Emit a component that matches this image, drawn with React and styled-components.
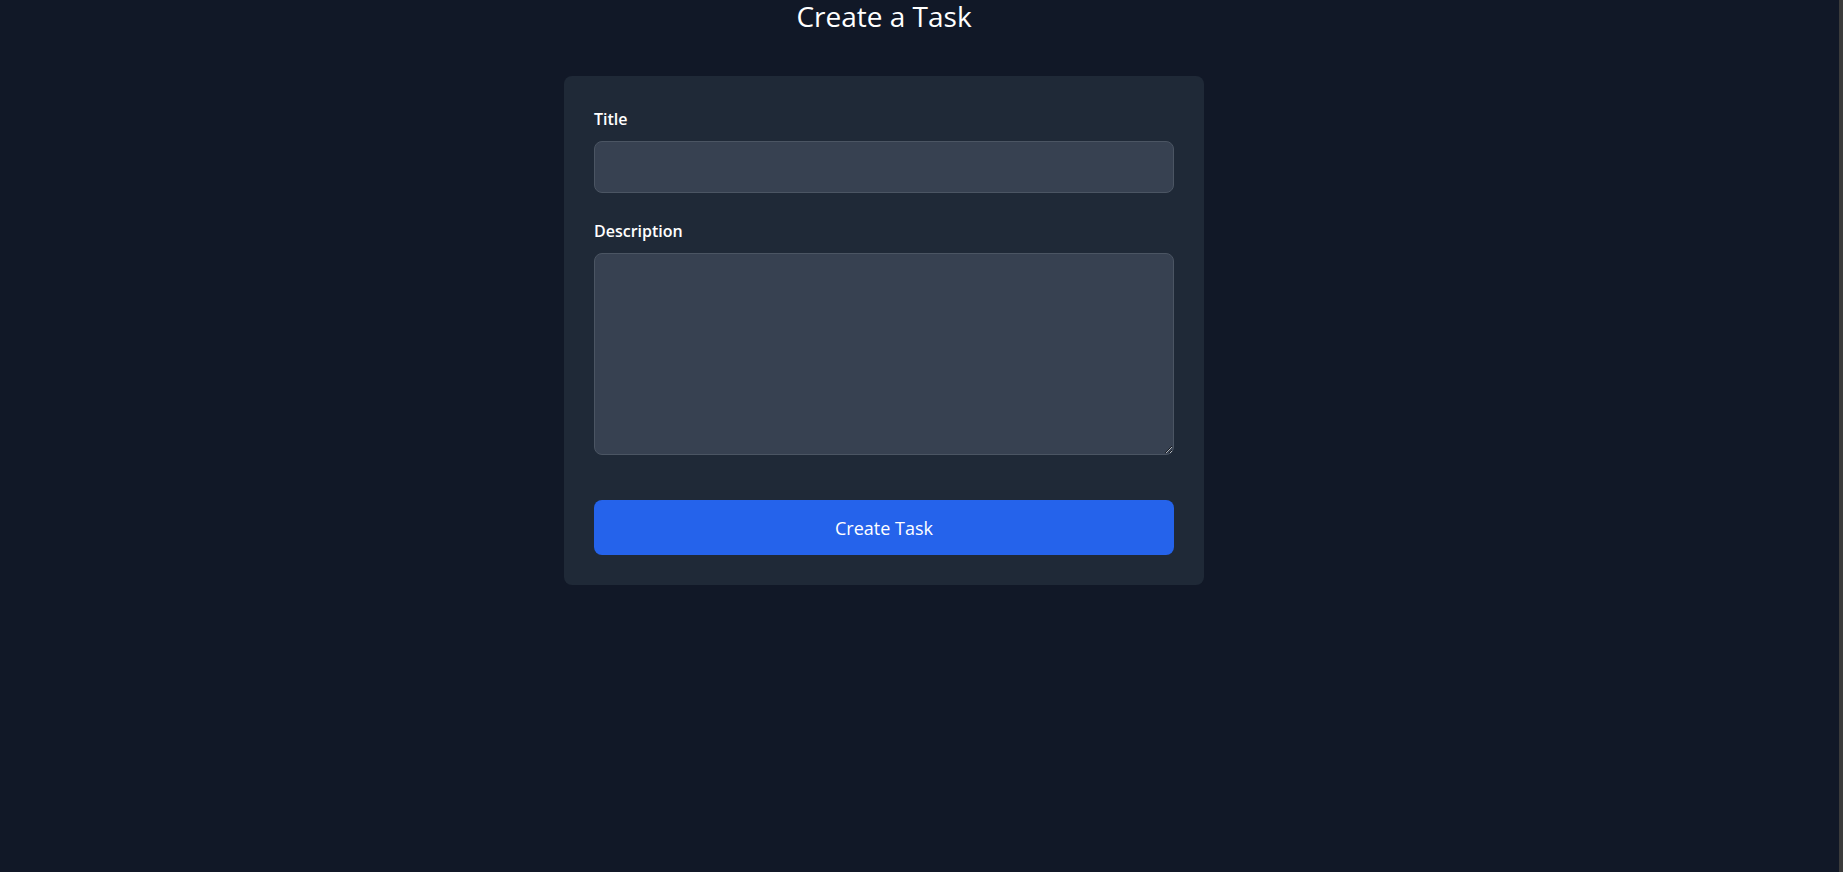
import React from 'react';
import styled, { createGlobalStyle } from 'styled-components';

const GlobalStyle = createGlobalStyle`
	html, body {
		margin: 0;
		padding: 0;
		background-color: #111827;
	}
	body {
		font-family: 'Open Sans', 'Noto Sans', sans-serif;
		color: #ffffff;
	}
	* {
		box-sizing: border-box;
	}
`;

const Page = styled.div`
	display: flex;
	min-height: 872px;
	background-color: #111827;
`;

const Main = styled.main`
	flex: 1;
	display: flex;
	flex-direction: column;
	align-items: center;
	padding-right: 71px;
`;

const ScrollStrip = styled.div`
	width: 4px;
	background-color: #3b3b3b;
`;

const Heading = styled.h1`
	margin: 0;
	font-size: 28px;
	font-weight: 400;
	line-height: 32px;
	color: #ffffff;
`;

const Card = styled.form`
	margin-top: 44px;
	width: 640px;
	padding: 30px;
	background-color: #1f2937;
	border-radius: 8px;
	display: flex;
	flex-direction: column;
`;

const Field = styled.div`
	display: flex;
	flex-direction: column;
	margin-bottom: ${(props) => props.gap || '25px'};
`;

const Label = styled.label`
	font-size: 16px;
	font-weight: 600;
	line-height: 24px;
	padding-top: 1px;
	margin-bottom: 10px;
	color: #ffffff;
`;

const Input = styled.input`
	height: 52px;
	width: 100%;
	padding: 12px 16px;
	background-color: #374151;
	border: 1px solid #4b5563;
	border-radius: 8px;
	color: #ffffff;
	font-family: inherit;
	font-size: 16px;
	outline: none;
`;

const TextArea = styled.textarea`
	display: block;
	height: 202px;
	width: 100%;
	padding: 12px 16px;
	background-color: #374151;
	border: 1px solid #4b5563;
	border-radius: 8px;
	color: #ffffff;
	font-family: inherit;
	font-size: 16px;
	outline: none;
`;

const Button = styled.button`
	height: 55px;
	width: 100%;
	border: none;
	border-radius: 8px;
	background-color: #2563eb;
	color: #ffffff;
	font-family: inherit;
	font-size: 18px;
	cursor: pointer;
`;

const App = () => {
	return (
		<Page>
			<GlobalStyle />
			<Main>
				<Heading>Create a Task</Heading>
				<Card onSubmit={(e) => e.preventDefault()}>
					<Field>
						<Label htmlFor='title'>Title</Label>
						<Input id='title' type='text' />
					</Field>
					<Field gap='45px'>
						<Label htmlFor='description'>Description</Label>
						<TextArea id='description' />
					</Field>
					<Button type='submit'>Create Task</Button>
				</Card>
			</Main>
			<ScrollStrip />
		</Page>
	);
};

export default App;
